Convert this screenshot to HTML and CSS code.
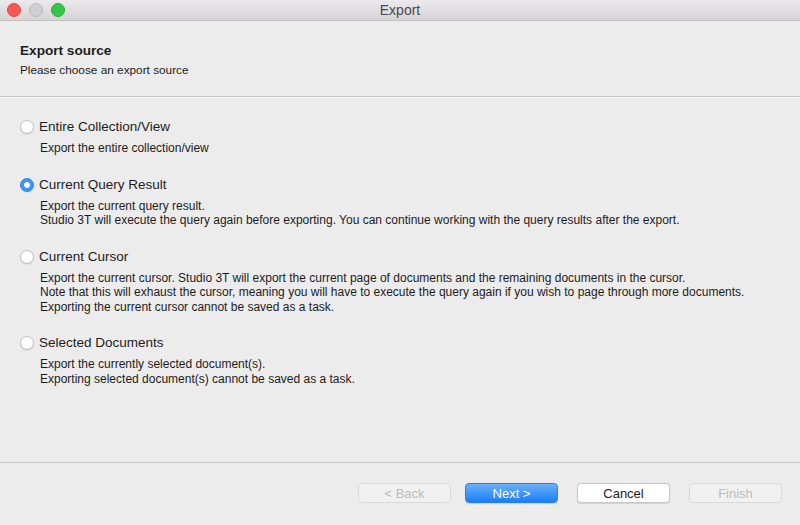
FILE: index.html
```html
<!DOCTYPE html>
<html lang="en">

<head>
    <meta charset="UTF-8">
    <title>Export</title>
    <link rel="stylesheet" href="styles.css">
</head>

<body>
    <div id="window">
        <div id="titlebar">
            <div class="lights">
                <span class="light red"></span>
                <span class="light gray"></span>
                <span class="light green"></span>
            </div>
            <div class="title">Export</div>
        </div>

        <div id="header">
            <div class="headTitle">Export source</div>
            <div class="headSub">Please choose an export source</div>
        </div>

        <div id="options">
            <div class="option">
                <div class="label"><span class="radio"></span>Entire Collection/View</div>
                <div class="desc">Export the entire collection/view</div>
            </div>
            <div class="option">
                <div class="label"><span class="radio checked"></span>Current Query Result</div>
                <div class="desc">Export the current query result.<br>Studio 3T will execute the query again before exporting. You can continue working with the query results after the export.</div>
            </div>
            <div class="option">
                <div class="label"><span class="radio"></span>Current Cursor</div>
                <div class="desc">Export the current cursor. Studio 3T will export the current page of documents and the remaining documents in the cursor.<br>Note that this will exhaust the cursor, meaning you will have to execute the query again if you wish to page through more documents.<br>Exporting the current cursor cannot be saved as a task.</div>
            </div>
            <div class="option">
                <div class="label"><span class="radio"></span>Selected Documents</div>
                <div class="desc">Export the currently selected document(s).<br>Exporting selected document(s) cannot be saved as a task.</div>
            </div>
        </div>

        <div id="footer">
            <button class="btn disabled back">&lt; Back</button>
            <button class="btn primary">Next &gt;</button>
            <button class="btn">Cancel</button>
            <button class="btn disabled">Finish</button>
        </div>
    </div>
</body>

</html>
```

FILE: styles.css
```css
body {
    margin: 0;
    background: #ececec;
    font-family: "Liberation Sans", Arial, sans-serif;
    color: #1c1c1c;
}

#window {
    width: 800px;
    height: 525px;
    display: flex;
    flex-direction: column;
}

#titlebar {
    height: 20px;
    border-bottom: 1px solid #c3c1c3;
    background: linear-gradient(#ebe9eb, #d6d4d6);
    position: relative;
    display: flex;
    align-items: center;
    justify-content: center;
}

.lights {
    position: absolute;
    left: 7px;
    top: 3px;
    display: flex;
    gap: 8px;
}

.light {
    width: 12px;
    height: 12px;
    border-radius: 50%;
}

.red {
    background: #fc5753;
    border: 0.5px solid #df4744;
}

.gray {
    background: #d0cfd0;
    border: 0.5px solid #bdbcbd;
}

.green {
    background: #33c748;
    border: 0.5px solid #27aa35;
}

.title {
    font-size: 14px;
    color: #4a4a4a;
}

#header {
    height: 76px;
    padding: 22px 20px 0;
    box-sizing: border-box;
    border-bottom: 1px solid #c6c6c6;
}

.headTitle {
    font-weight: bold;
    font-size: 13.6px;
    line-height: 16px;
}

.headSub {
    font-size: 11.8px;
    line-height: 14px;
    margin-top: 4px;
}

#options {
    flex: 1;
    border-top: 1px solid #f6f6f6;
    padding: 20px 0 0 20px;
    display: flex;
    flex-direction: column;
    gap: 20px;
}

.label {
    font-size: 13.5px;
    line-height: 18px;
    display: flex;
    align-items: center;
}

.radio {
    width: 14px;
    height: 14px;
    box-sizing: border-box;
    border-radius: 50%;
    background: #fff;
    border: 0.5px solid #c2c2c2;
    box-shadow: 0 0.5px 1px rgba(0, 0, 0, 0.15);
    margin-right: 5px;
}

.radio.checked {
    background: radial-gradient(circle, #fff 0, #fff 2.6px, #3a95f9 3.2px);
    border-color: #2f84ea;
}

.desc {
    font-size: 12px;
    line-height: 14.5px;
    margin-top: 5px;
    padding-left: 20px;
}

#footer {
    height: 63px;
    border-top: 1px solid #c9c9c9;
    box-sizing: border-box;
    padding: 20px 18px 0 0;
    display: flex;
    justify-content: flex-end;
    gap: 19px;
}

.btn {
    width: 93px;
    height: 20px;
    border-radius: 4px;
    border: 0.5px solid #c8c8c8;
    background: #fff;
    font-family: "Liberation Sans", Arial, sans-serif;
    font-size: 13px;
    color: #1c1c1c;
    box-shadow: 0 0.5px 1px rgba(0, 0, 0, 0.12);
    padding: 0;
}

.btn.back {
    margin-right: -5px;
}

.btn.disabled {
    background: #f1f1f1;
    border-color: #dadada;
    color: #bcbcbc;
    box-shadow: none;
}

.btn.primary {
    background: linear-gradient(#6ab1fb, #1a7ef5);
    border-color: #2b80ec;
    color: #fff;
}
```
